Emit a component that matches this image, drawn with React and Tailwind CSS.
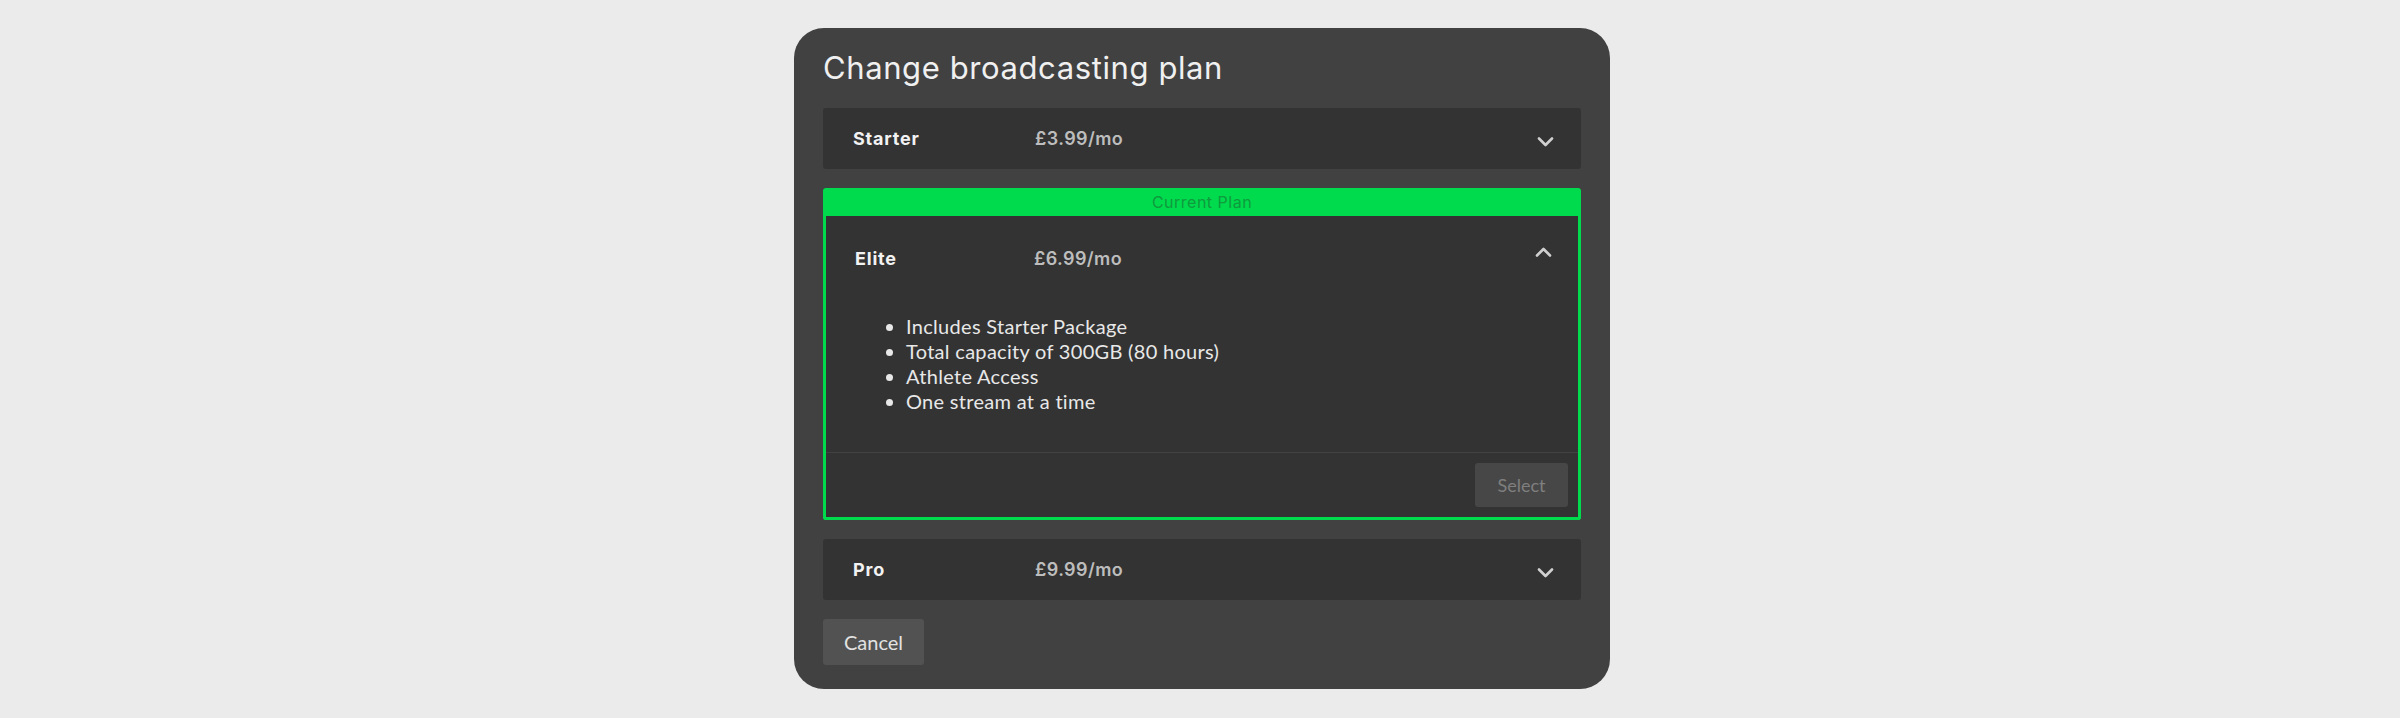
import React from "react";

const head = { fontFamily: "Inter, 'Noto Sans', sans-serif" };
const body = { fontFamily: "Lato, 'Open Sans', sans-serif" };

function Chevron({ up }) {
  return (
    <svg width="17" height="10" viewBox="0 0 17 10" className={up ? "-translate-y-[3px]" : "translate-y-[3px]"}>
      <polyline
        points={up ? "2,8.5 8.5,2 15,8.5" : "2,1.5 8.5,8 15,1.5"}
        fill="none"
        stroke="#d0d0d0"
        strokeWidth="2.6"
        strokeLinecap="round"
        strokeLinejoin="round"
      />
    </svg>
  );
}

function PlanRow({ name, price }) {
  return (
    <div className="h-[61px] bg-[#333333] rounded-[3px] flex items-center pl-[30px] pr-[27px]" style={head}>
      <span className="w-[182px] text-[18px] font-bold tracking-[0.8px] text-[#f2f2f2]">{name}</span>
      <span className="flex-1 text-[18px] font-semibold tracking-[0.4px] text-[#bdbdbd]">{price}</span>
      <Chevron />
    </div>
  );
}

export default function App() {
  const features = [
    "Includes Starter Package",
    "Total capacity of 300GB (80 hours)",
    "Athlete Access",
    "One stream at a time",
  ];

  return (
    <div className="min-h-[718px] bg-[#ebebeb] flex justify-center pt-[28px]">
      <div className="w-[816px] h-fit bg-[#414141] rounded-[30px] px-[29px] pt-[21px] pb-[24px] ml-[4px]">
        <h1 className="text-[31px] leading-[38px] tracking-[0.6px] text-[#f0f0f0] font-normal mb-[21px]" style={head}>
          Change broadcasting plan
        </h1>

        <PlanRow name="Starter" price="£3.99/mo" />

        {/* Current plan */}
        <div className="mt-[19px]">
          <div className="h-[28px] bg-[#00db4d] rounded-t-[3px] flex items-center justify-center text-[16px] tracking-[0.5px] text-[#0f9a3d]" style={head}>
            Current Plan
          </div>
          <div className="bg-[#333333] border-[3px] border-t-0 border-[#00db4d] rounded-b-[3px]">
            <div className="h-[84px] flex items-center pl-[29px] pr-[26px]" style={head}>
              <span className="w-[179px] text-[18px] font-bold tracking-[0.8px] text-[#f2f2f2]">Elite</span>
              <span className="flex-1 text-[18px] font-semibold tracking-[0.4px] text-[#bdbdbd]">£6.99/mo</span>
              <span className="-translate-y-[3px]">
                <Chevron up />
              </span>
            </div>
            <ul className="list-disc pl-[80px] pt-[14px] pb-[38px] text-[20px] leading-[25px] tracking-[0.3px] text-[#e8e8e8]" style={body}>
              {features.map((f) => (
                <li key={f}>{f}</li>
              ))}
            </ul>
            <div className="border-t border-[#424242] p-[10px] flex justify-end">
              <button className="w-[93px] h-[44px] bg-[#474747] rounded-[3px] text-[18px] text-[#7f7f7f]" style={body}>
                Select
              </button>
            </div>
          </div>
        </div>

        <div className="mt-[19px]">
          <PlanRow name="Pro" price="£9.99/mo" />
        </div>

        <button className="mt-[19px] w-[101px] h-[46px] bg-[#525252] rounded-[3px] text-[20px] text-[#e2e2e2]" style={body}>
          Cancel
        </button>
      </div>
    </div>
  );
}
